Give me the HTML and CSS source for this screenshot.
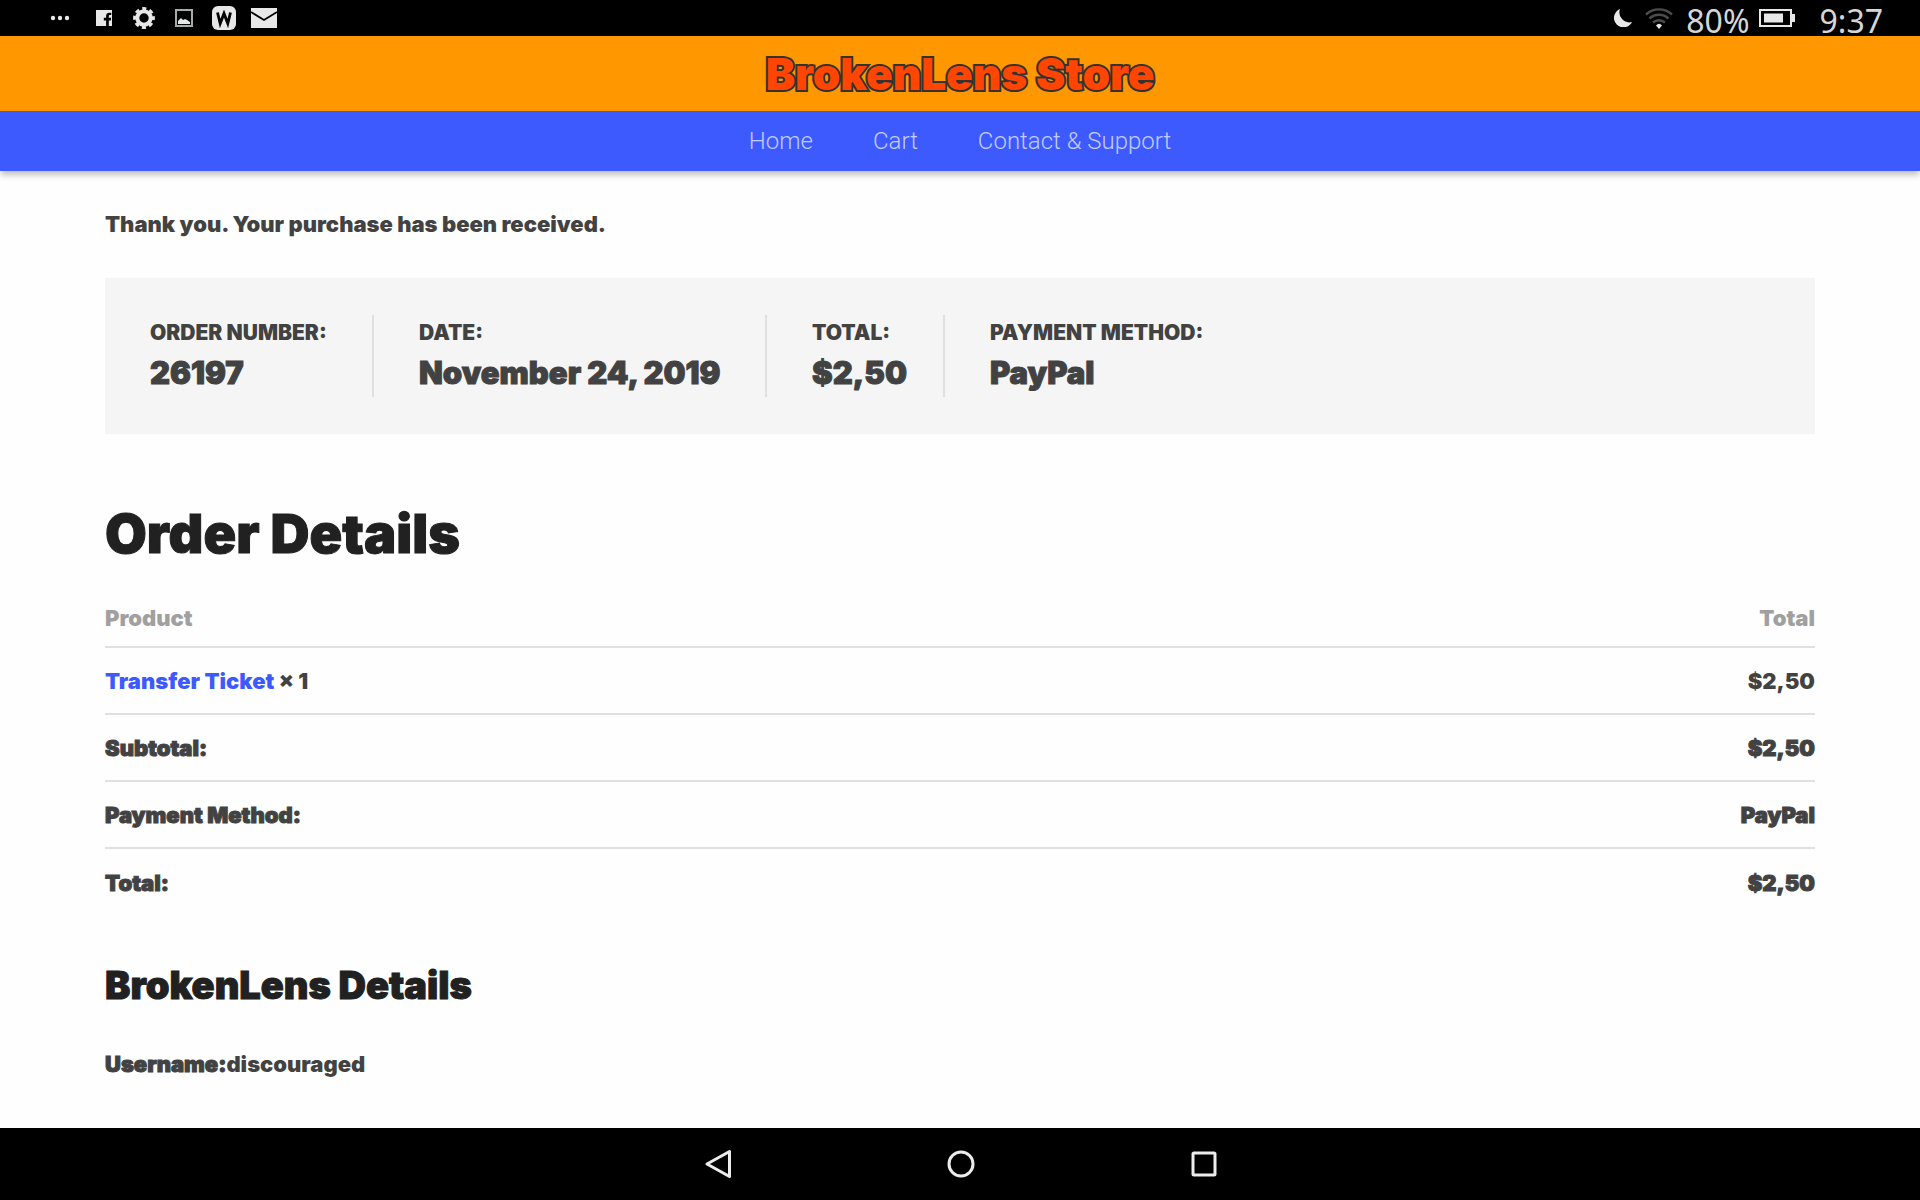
FILE: index.html
```html
<!DOCTYPE html>
<html lang="en">
<head>
<meta charset="utf-8">
<meta name="viewport" content="width=device-width, initial-scale=1">
<title>Order received - BrokenLens Store</title>
<link rel="stylesheet" href="styles.css">
</head>
<body>
<div class="status-bar">
  <div class="status-icons">
    <svg class="icon-dots" width="20" height="20" viewBox="0 0 20 20"><circle cx="3" cy="10" r="2.2"/><circle cx="10" cy="10" r="2.2"/><circle cx="17" cy="10" r="2.2"/></svg>
    <svg class="icon-fb" width="16" height="16" viewBox="0 0 16 16"><path fill-rule="evenodd" d="M0 0h16v16h-3.2v-5.6h2l.3-2.6h-2.3V6.300c0-.8.3-1.200 1.200-1.200h1.200V2.800c-.5-.1-1-.1-1.700-.1-2.200 0-3.400 1.200-3.400 3.300v1.800H7.800v2.600h2.300V16H0z"/></svg>
    <svg class="icon-gear" width="22" height="22" viewBox="0 0 22 22"><circle cx="11" cy="11" r="6.700" fill="none" stroke="#e8e8e8" stroke-width="4"/><circle cx="11" cy="11" r="9.400" fill="none" stroke="#e8e8e8" stroke-width="3" stroke-dasharray="4.100 3.280" stroke-dashoffset="2.050"/></svg>
    <svg class="icon-image" width="18" height="18" viewBox="0 0 18 18"><rect x="1" y="1" width="16" height="16" fill="none" stroke="#a9adaa" stroke-width="2"/><path d="M3 15v-3l3-3 2 2 2-1 2 1 3 2v2z"/></svg>
    <svg class="icon-w" width="24" height="24" viewBox="0 0 24 24"><rect width="24" height="24" rx="6"/><path d="M5.500 6.500l2.700 11 3.800-10 3.800 10 2.700-11" fill="none" stroke="#000" stroke-width="2.800"/></svg>
    <svg class="icon-mail" width="26" height="20" viewBox="0 0 26 20"><path d="M0 0h26v20H0z"/><path d="M0 4l13 8 13-8" fill="none" stroke="#000" stroke-width="1.800"/></svg>
  </div>
  <div class="status-info">
    <svg class="icon-moon" width="18" height="18" viewBox="0 0 18 18"><path d="M6 0a9.500 9.500 0 1 0 12 13A10 10 0 0 1 6 0z"/></svg>
    <svg class="icon-wifi" width="28" height="22" viewBox="0 0 28 22"><g fill="none" stroke="#4c4c4c" stroke-width="2.400"><path d="M1 7.500a19 19 0 0 1 26 0"/><path d="M4.500 11.500a14 14 0 0 1 19 0"/><path d="M8 15.500a9 9 0 0 1 12 0"/></g><path d="M11 18.500q3-3.500 6 0l-3 3.500z"/></svg>
    <span class="battery-level">80%</span>
    <svg class="icon-battery" width="36" height="18" viewBox="0 0 36 18"><path fill-rule="evenodd" d="M0 0h33v5h3v8h-3v5H0zM2 2v14h29V2z"/><path d="M5 4.500h19v9H5z"/></svg>
    <span class="clock">9:37</span>
  </div>
</div>

<header class="site-header">
  <div class="site-title">BrokenLens Store</div>
</header>
<nav class="site-nav">
  <a href="#home">Home</a>
  <a href="#cart">Cart</a>
  <a href="#contact">Contact &amp; Support</a>
</nav>

<main class="content">
  <p class="notice">Thank you. Your purchase has been received.</p>

  <dl class="overview">
    <div class="overview-item overview-number"><dt>Order number:</dt><dd>26197</dd></div>
    <div class="overview-item overview-date"><dt>Date:</dt><dd>November 24, 2019</dd></div>
    <div class="overview-item overview-total"><dt>Total:</dt><dd>$2,50</dd></div>
    <div class="overview-item"><dt>Payment method:</dt><dd>PayPal</dd></div>
  </dl>

  <h1 class="page-title">Order Details</h1>
  <table class="order-table">
    <thead>
      <tr><th scope="col">Product</th><th scope="col">Total</th></tr>
    </thead>
    <tbody>
      <tr><td><a href="#ticket">Transfer Ticket</a> × 1</td><td>$2,50</td></tr>
    </tbody>
    <tfoot>
      <tr><th scope="row">Subtotal:</th><td>$2,50</td></tr>
      <tr><th scope="row">Payment Method:</th><td>PayPal</td></tr>
      <tr><th scope="row">Total:</th><td>$2,50</td></tr>
    </tfoot>
  </table>

  <h2 class="section-title">BrokenLens Details</h2>
  <p class="detail"><strong>Username:</strong>discouraged</p>
</main>

<div class="system-nav">
  <button type="button" aria-label="Back"><svg width="30" height="30" viewBox="0 0 30 30"><path d="M26.500 2.500v25L4 15z"/></svg></button>
  <button type="button" aria-label="Home"><svg width="30" height="30" viewBox="0 0 30 30"><circle cx="15" cy="15" r="12"/></svg></button>
  <button type="button" aria-label="Recent apps"><svg width="30" height="30" viewBox="0 0 30 30"><rect x="4" y="4" width="22" height="22" rx="1"/></svg></button>
</div>
</body>
</html>
```
FILE: styles.css
```css
* { box-sizing: border-box; }

body {
  margin: 0;
  min-height: 100vh;
  display: flex;
  flex-direction: column;
  background: #fefefe;
  color: #424242;
  font-family: Inter, "Open Sans", sans-serif;
  font-weight: 900;
  font-size: 22px;
  line-height: 32px;
}

a { text-decoration: none; }

.status-bar {
  display: flex;
  justify-content: space-between;
  height: 36px;
  padding: 0 37px 0 50px;
  background: #000;
  color: #d6d6d6;
  font: 400 32px/42px "Noto Sans", sans-serif;
}
.status-bar svg { fill: #e8e8e8; }
.status-icons,
.status-info { display: flex; align-items: center; }
.icon-fb { margin-left: 26px; }
.icon-gear { margin-left: 21px; }
.icon-image { margin-left: 20px; }
.icon-w { margin-left: 19px; }
.icon-mail { margin-left: 15px; }
.icon-wifi { margin-left: 13px; }
.battery-level { margin-left: 13px; }
.battery-level,
.clock { align-self: flex-start; }
.icon-battery { margin-left: 9px; }
.clock { margin-left: 25px; }

.site-header {
  display: flex;
  justify-content: center;
  align-items: center;
  height: 75px;
  background: #ff9800;
}
.site-title {
  color: #ff4500;
  font-size: 44px;
  line-height: 56px;
  -webkit-text-stroke: 4px #333;
  paint-order: stroke fill;
}

.site-nav {
  display: flex;
  justify-content: center;
  gap: 60px;
  height: 60px;
  background: #3d5afe;
  box-shadow: 0 5px 6px -1px rgba(0, 0, 0, .25);
  font: 300 24px/60px Roboto, sans-serif;
}
.site-nav a { color: rgba(255, 255, 255, .7); }

.content {
  flex: 1;
  padding: 37px 105px 0;
}

.notice { margin: 0 0 38px; }

.overview {
  display: flex;
  margin: 0;
  padding: 37px 0;
  min-height: 156px;
  background: #f5f5f5;
}
.overview-item {
  padding: 0 36px 0 45px;
  border-right: 2px solid #e0e0e0;
}
.overview-item:last-child { border-right: 0; }
.overview-number { min-width: 269px; }
.overview-date { min-width: 393px; }
.overview-total { min-width: 178px; }
.overview dt {
  padding-top: 2px;
  font-size: 21px;
  text-transform: uppercase;
}
.overview dd {
  margin: 0;
  padding-top: 2px;
  font-size: 31px;
  line-height: 44px;
}

.page-title {
  margin: 64px 0 32px;
  color: #212121;
  font-size: 54px;
  font-weight: 900;
  line-height: 72px;
}

.order-table {
  width: 100%;
  border-collapse: separate;
  border-spacing: 0;
}
.order-table th,
.order-table td {
  height: 67px;
  padding: 0;
  border-bottom: 2px solid #e0e0e0;
  font-weight: 900;
  text-align: left;
}
.order-table th:last-child,
.order-table td:last-child { text-align: right; }
.order-table thead th {
  height: 45px;
  padding-bottom: 12px;
  color: #a0a0a0;
}
.order-table tfoot tr:last-child > * { border-bottom: 0; }
.order-table a { color: #3d5afe; }

/* extra-heavy text on top of the black weight */
.site-title,
.page-title,
.section-title,
.overview dd,
.order-table tfoot,
.detail strong { font-weight: 900; }
.page-title,
.section-title,
.overview dd,
.order-table tfoot,
.detail strong { -webkit-text-stroke: 1px; }

.section-title {
  margin: 45px 0 39px;
  color: #212121;
  font-size: 38px;
  line-height: 48px;
}

.detail { margin: 0; }

.system-nav {
  display: flex;
  justify-content: center;
  gap: 213px;
  height: 72px;
  padding-left: 2px;
  background: #000;
}
.system-nav button {
  display: flex;
  align-items: center;
  padding: 0;
  border: 0;
  background: none;
}
.system-nav svg {
  fill: none;
  stroke: #ececec;
  stroke-width: 3;
  stroke-linejoin: round;
}
```
